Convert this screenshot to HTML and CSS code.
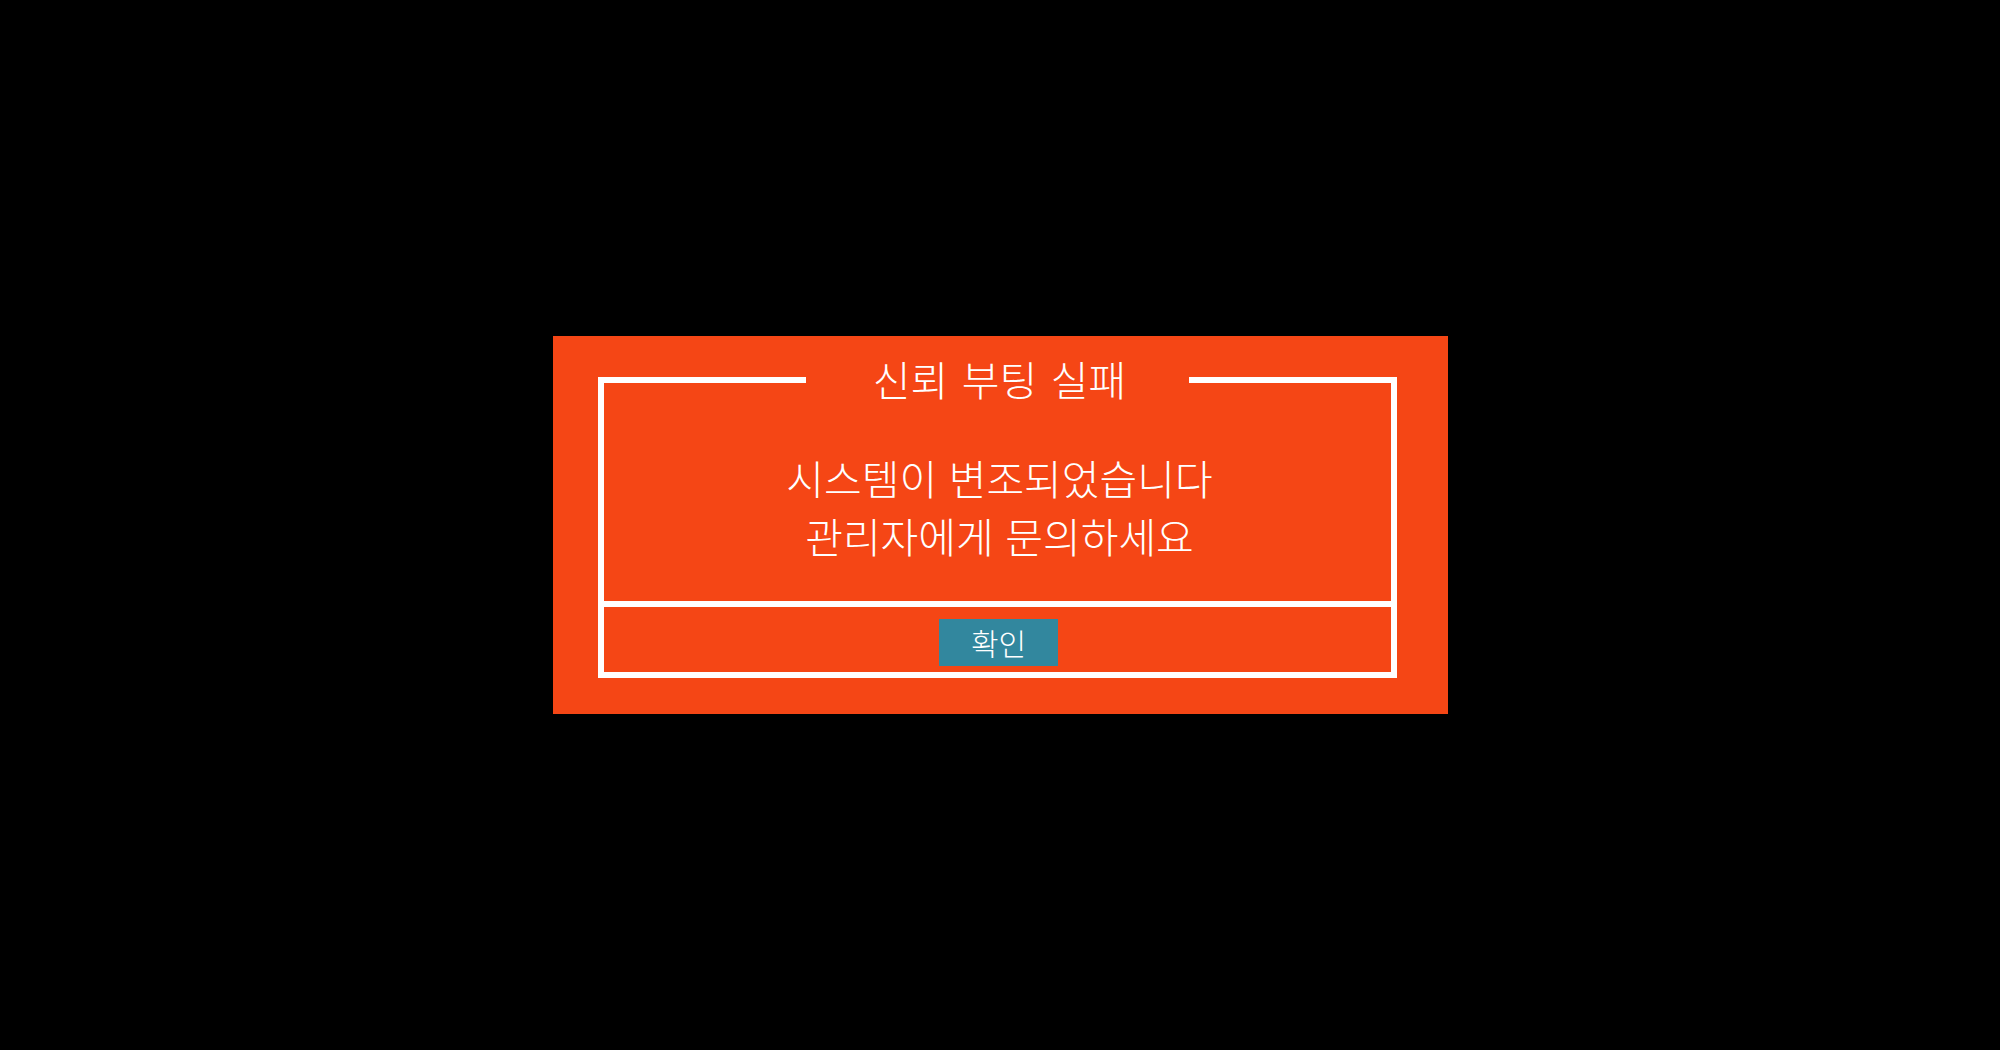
FILE: index.html
```html
<!DOCTYPE html>
<html lang="ko">
<head>
<meta charset="utf-8">
<title>신뢰 부팅 실패</title>
<link rel="stylesheet" href="styles.css">
</head>
<body>
<div class="dialog">
  <fieldset class="frame">
    <legend class="title">신뢰 부팅 실패</legend>
    <div class="message">
      <p class="line">시스템이 변조되었습니다</p>
      <p class="line">관리자에게 문의하세요</p>
    </div>
    <div class="actions">
      <button class="ok" type="button">확인</button>
    </div>
  </fieldset>
</div>
</body>
</html>
```
FILE: styles.css
```css
html, body {
  margin: 0;
  padding: 0;
  background: #000;
  height: 100%;
}
body {
  display: flex;
  align-items: center;
  justify-content: center;
  font-family: "Noto Sans CJK KR", "Noto Sans", sans-serif;
  font-weight: 300;
  color: #fff;
}
.dialog {
  box-sizing: border-box;
  width: 895px;
  height: 378px;
  background: #f54615;
  padding: 20px 51px 36px 45px;
}
.frame {
  box-sizing: border-box;
  width: 799px;
  height: 322px;
  margin: 0;
  padding: 0;
  border: 6px solid #fff;
  display: flex;
  flex-direction: column;
  min-width: 0;
}
.title {
  box-sizing: border-box;
  width: 383px;
  margin: 0 auto;
  padding: 0 0 4px 5px;
  text-align: center;
  font-size: 41px;
  line-height: 44px;
  height: 48px;
  word-spacing: 2px;
}
.message {
  flex: 1;
  display: flex;
  flex-direction: column;
  align-items: center;
  justify-content: flex-start;
  padding: 44px 0 0 5px;
}
.line {
  margin: 0;
  font-size: 41px;
  line-height: 58px;
}
.actions {
  height: 71px;
  box-sizing: border-box;
  border-top: 6px solid #fff;
  padding-top: 12px;
  display: flex;
  justify-content: center;
}
.ok {
  width: 119px;
  height: 47px;
  margin-left: 3px;
  background: #32879e;
  border: none;
  color: #fff;
  font-family: inherit;
  font-weight: 300;
  font-size: 30px;
  line-height: 47px;
  padding: 0;
}
```
